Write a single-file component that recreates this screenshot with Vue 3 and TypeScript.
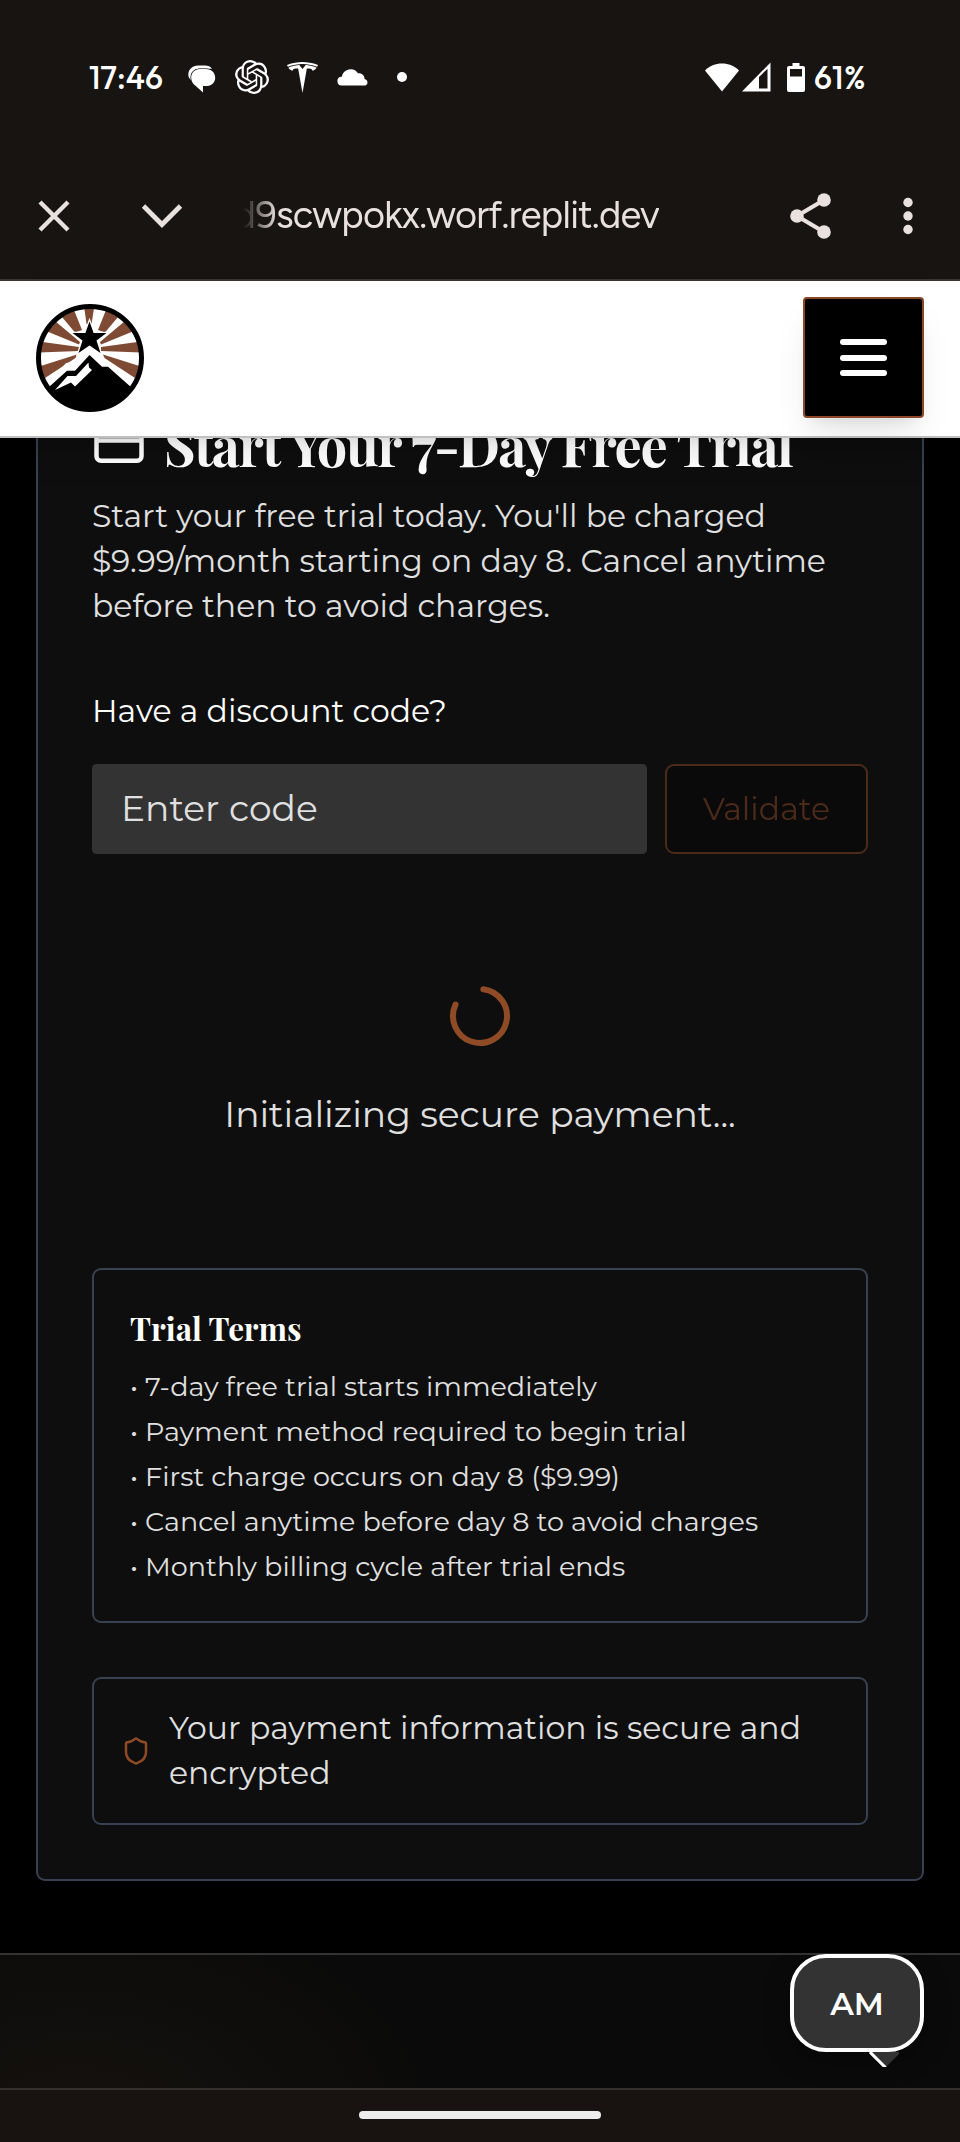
<script setup lang="ts">
import { ref } from 'vue'

const address = 'd9scwpokx.worf.replit.dev'
const code = ref('')
const terms: string[] = [
  '7-day free trial starts immediately',
  'Payment method required to begin trial',
  'First charge occurs on day 8 ($9.99)',
  'Cancel anytime before day 8 to avoid charges',
  'Monthly billing cycle after trial ends',
]
</script>

<template>
  <div class="screen">
    <div class="status-bar">
      <span class="clock">17:46</span>
      <svg class="ic-chat" width="28" height="28" viewBox="0 0 28 28">
        <path d="M10 .5h7c3 0 5.500 1 7 3.300H11C6 3.800 3 7 2.600 11.500c0 1.500.2 2.500.5 3.500C1.200 13.500.3 11.500.3 9.500.3 4.500 4.500.5 10 .5Z" fill="#fff" />
        <path d="M12 4h6c5.500 0 9.200 3.900 9.200 8.700s-3.700 8.300-9.200 8.300h-3v6.400l-7.500-6.700C4.800 19 3.200 16 3.200 12.700c0-4.800 3.500-8.700 8.800-8.700Z" fill="#fff" stroke="#181411" stroke-width="1" paint-order="stroke" />
      </svg>
      <svg class="ic-knot" width="34" height="34" viewBox="0 0 24 24">
        <path fill="#fff" d="M22.2819 9.8211a5.9847 5.9847 0 0 0-.5157-4.9108 6.0462 6.0462 0 0 0-6.5098-2.9A6.0651 6.0651 0 0 0 4.9807 4.1818a5.9847 5.9847 0 0 0-3.9977 2.9 6.0462 6.0462 0 0 0 .7427 7.0966 5.98 5.98 0 0 0 .511 4.9107 6.051 6.051 0 0 0 6.5146 2.9001A5.9847 5.9847 0 0 0 13.2599 24a6.0557 6.0557 0 0 0 5.7718-4.2058 5.9894 5.9894 0 0 0 3.9977-2.9001 6.0557 6.0557 0 0 0-.7475-7.0729zm-9.022 12.6081a4.4755 4.4755 0 0 1-2.8764-1.0408l.1419-.0804 4.7783-2.7582a.7948.7948 0 0 0 .3927-.6813v-6.7369l2.02 1.1686a.071.071 0 0 1 .038.052v5.5826a4.504 4.504 0 0 1-4.4945 4.4944zm-9.6607-4.1254a4.4708 4.4708 0 0 1-.5346-3.0137l.142.0852 4.783 2.7582a.7712.7712 0 0 0 .7806 0l5.8428-3.3685v2.3324a.0804.0804 0 0 1-.0332.0615L9.74 19.9502a4.4992 4.4992 0 0 1-6.1408-1.6464zM2.3408 7.8956a4.485 4.485 0 0 1 2.3655-1.9728V11.6a.7664.7664 0 0 0 .3879.6765l5.8144 3.3543-2.0201 1.1685a.0757.0757 0 0 1-.071 0l-4.8303-2.7865A4.504 4.504 0 0 1 2.3408 7.872zm16.5963 3.8558L13.1038 8.364 15.1192 7.2a.0757.0757 0 0 1 .071 0l4.8303 2.7913a4.4944 4.4944 0 0 1-.6765 8.1042v-5.6772a.79.79 0 0 0-.407-.667zm2.0107-3.0231l-.142-.0852-4.7735-2.7818a.7759.7759 0 0 0-.7854 0L9.409 9.2297V6.8974a.0662.0662 0 0 1 .0284-.0615l4.8303-2.7866a4.4992 4.4992 0 0 1 6.6802 4.66zM8.3065 12.863l-2.02-1.1638a.0804.0804 0 0 1-.038-.0567V6.0742a4.4992 4.4992 0 0 1 7.3757-3.4537l-.142.0805L8.704 5.459a.7948.7948 0 0 0-.3927.6813zm1.0976-2.3654l2.602-1.4998 2.6069 1.4998v2.9994l-2.5974 1.4997-2.6067-1.4997Z" />
      </svg>
      <svg class="ic-tee" width="31" height="31" viewBox="0 0 24 24">
        <path fill="#fff" d="M12 5.362l2.475-3.026s4.245.09 8.471 2.054c-1.082 1.636-3.231 2.438-3.231 2.438-.146-1.439-1.154-1.79-4.354-1.79L12 24 8.619 5.034c-3.18 0-4.188.354-4.335 1.792 0 0-2.146-.795-3.229-2.43C5.28 2.431 9.525 2.34 9.525 2.34L12 5.362l-.004.002H12v-.002zm0-3.899c3.415-.03 7.326.528 11.328 2.28.535-.968.672-1.395.672-1.395C19.625.612 15.528.015 12 0 8.472.015 4.375.61 0 2.349c0 0 .195.525.672 1.396C4.674 1.989 8.585 1.435 12 1.46v.003z" />
      </svg>
      <svg class="ic-cloud" width="32" height="18" viewBox="0 0 32 18">
        <path fill="#fff" d="M4.500 17.500a4.400 4.400 0 0 1-.6-8.700c.2 0 .6-.1.9 0A9 9 0 0 1 21 5.200c4-.4 6.600 2.300 6.600 5.800a3.400 3.400 0 0 1 .9 6.500Z" />
      </svg>
      <span class="dot"></span>
      <svg class="ic-wifi" width="34" height="29" viewBox="0 0 34 29">
        <path fill="#fff" d="M17 28.500 0 7.500C4.500 2.800 10.500.5 17 .5s12.500 2.300 17 7Z" />
      </svg>
      <svg class="ic-signal" width="29" height="30" viewBox="0 0 29 30">
        <path fill="#fff" fill-rule="evenodd" d="M0 29.500 28.500.500v29ZM17 15v11.500h8.500V6.800Z" />
      </svg>
      <svg class="ic-battery" width="18" height="29" viewBox="0 0 18 29">
        <path fill="#fff" fill-rule="evenodd" d="M5.500 0h7v3H16a2 2 0 0 1 2 2v22a2 2 0 0 1-2 2H2a2 2 0 0 1-2-2V5a2 2 0 0 1 2-2h3.500ZM3 6v7.500h12V6Z" />
      </svg>
      <span class="percent">61%</span>
    </div>

    <div class="toolbar">
      <svg class="ic-close" width="32" height="32" viewBox="0 0 32 32">
        <path d="M2 2 30 30M30 2 2 30" stroke="#e9e1de" stroke-width="4.300" />
      </svg>
      <svg class="ic-down" width="42" height="24" viewBox="0 0 42 24">
        <path d="M2.500 2 21 20.500 39.500 2" fill="none" stroke="#e9e1de" stroke-width="4.800" />
      </svg>
      <div class="address"><span>{{ address }}</span></div>
      <svg class="ic-share" width="42" height="46" viewBox="0 0 42 46">
        <path d="M34 7 7 23 34 39" fill="none" stroke="#e9e1de" stroke-width="4.200" />
        <g fill="#e9e1de">
          <circle cx="34" cy="7" r="6.800" />
          <circle cx="7" cy="23" r="6.800" />
          <circle cx="34" cy="39" r="6.800" />
        </g>
      </svg>
      <svg class="ic-more" width="10" height="38" viewBox="0 0 10 38">
        <g fill="#e9e1de">
          <circle cx="5" cy="5.500" r="4.700" />
          <circle cx="5" cy="19" r="4.700" />
          <circle cx="5" cy="32.500" r="4.700" />
        </g>
      </svg>
    </div>

    <header class="site-header">
      <svg class="logo" width="108" height="108" viewBox="0 0 108 108">
        <defs>
          <clipPath id="disc"><circle cx="54" cy="54" r="50.500" /></clipPath>
        </defs>
        <circle cx="54" cy="54" r="51.500" fill="#fff" />
        <g clip-path="url(#disc)">
          <g fill="#7f4a33">
            <path d="M48.300 4h9.700l-2.500 16h-5Z" />
            <path d="M26 13 38 6 46 26 39 28.500Z" />
            <path d="M82 13 70 6 62 26 69 28.500Z" />
            <path d="M10 27 19 17 44 38 43 40.500Z" />
            <path d="M98 27 89 17 64 38 65 40.500Z" />
            <path d="M3 37.500 43 43v4L3 48.500Z" />
            <path d="M105 37.500 65 43v4l40 1.500Z" />
            <path d="M3 62.500 41 50.500 39.500 54 9 74Z" />
            <path d="M105 62.500 67 50.500 68.500 54 99 74Z" />
          </g>
          <path d="M53.500 17.500 57.600 29H70.500L60.500 36.500 64.500 49 53.500 41.500 42.500 49 46.500 36.500 36.500 29H49.400Z" fill="#000" stroke="#fff" stroke-width="2.600" paint-order="stroke" />
          <path d="M53.500 42 40 54 36 58 30 59 8 84H100L72 60 66 54Z" fill="#fff" />
          <path d="M53.500 51 66 62.700h6L96 84v24H10L13 83l18-16.300h8Z" fill="#000" />
          <path d="M52.500 58.500 53 63.500 56 66 39 82.500 35 78.500 19 86 31.500 72h8.500Z" fill="#fff" />
        </g>
        <circle cx="54" cy="54" r="51.500" fill="none" stroke="#000" stroke-width="5" />
      </svg>
      <button class="menu" type="button" aria-label="Menu">
        <span></span><span></span><span></span>
      </button>
    </header>

    <main class="content">
      <section class="card">
        <h3 class="card-title">
          <svg width="54" height="54" viewBox="0 0 24 24" fill="none" stroke="#fff" stroke-width="2">
            <rect x="2" y="5" width="20" height="14" rx="2" />
            <path d="M2 10h20" />
          </svg>
          Start Your 7-Day Free Trial
        </h3>
        <p class="lead">Start your free trial today. You'll be charged $9.99/month starting on day 8. Cancel anytime before then to avoid charges.</p>

        <label class="label" for="code">Have a discount code?</label>
        <div class="code-row">
          <input id="code" v-model="code" class="code" placeholder="Enter code">
          <button class="validate" type="button" disabled>Validate</button>
        </div>

        <div class="loading">
          <svg class="spinner" width="72" height="72" viewBox="0 0 24 24" fill="none" stroke="#8f4a26" stroke-width="2" stroke-linecap="round">
            <path d="M21 12a9 9 0 1 1-6.219-8.560" transform="rotate(-83 12 12)" />
          </svg>
          <p>Initializing secure payment...</p>
        </div>

        <div class="terms">
          <h4>Trial Terms</h4>
          <ul>
            <li v-for="term in terms" :key="term">• {{ term }}</li>
          </ul>
        </div>

        <div class="secure">
          <svg width="30" height="36" viewBox="0 0 24 24" fill="none" stroke="#8f4a26" stroke-width="2" stroke-linecap="round" stroke-linejoin="round">
            <path d="M20 13c0 5-3.500 7.500-7.660 8.950a1 1 0 0 1-.67-.01C7.500 20.500 4 18 4 13V6a1 1 0 0 1 1-1c2 0 4.500-1.200 6.240-2.720a1.170 1.170 0 0 1 1.520 0C14.510 3.810 17 5 19 5a1 1 0 0 1 1 1z" />
          </svg>
          <span>Your payment information is secure and encrypted</span>
        </div>
      </section>

      <footer class="footer">
        <div class="bubble">
          <span>AM</span>
          <i class="tail"></i>
        </div>
      </footer>
    </main>

    <div class="nav-bar"><span></span></div>
  </div>
</template>

<style>
body {
  margin: 0;
  background: #000;
}
</style>

<style scoped>
.screen,
.screen * {
  box-sizing: border-box;
}
.screen {
  display: flex;
  flex-direction: column;
  width: 960px;
  height: 2142px;
  overflow: hidden;
  background: #000;
  font-family: Montserrat, "Open Sans", sans-serif;
  color: #fff;
}
.screen svg {
  display: block;
  flex: none;
}
h3, h4, p, ul {
  margin: 0;
  padding: 0;
}

.status-bar {
  display: flex;
  align-items: center;
  height: 154px;
  padding-left: 89px;
  background: #181411;
}
.clock,
.percent {
  font-family: "Google Sans", Outfit, Figtree, Montserrat, sans-serif;
  font-size: 32px;
  font-weight: 500;
  line-height: 40px;
  letter-spacing: 0;
}
.clock { width: 99px; }
.ic-chat { margin-top: 3px; }
.ic-knot { margin-left: 19px; }
.ic-tee { margin-left: 18px; }
.ic-cloud { margin-left: 19px; }
.dot {
  width: 10px;
  height: 10px;
  margin-left: 28px;
  border-radius: 50%;
  background: #fff;
}
.ic-wifi { margin-left: 298px; }
.ic-signal { margin-left: 3px; }
.ic-battery { margin: 0 9px 0 16px; }
.percent { letter-spacing: 0.8px; }

.toolbar {
  display: flex;
  align-items: center;
  height: 127px;
  padding: 0 0 2px 38px;
  background: #181411;
  border-bottom: 2px solid #3b3532;
}
.ic-down { margin-left: 71px; }
.address {
  display: flex;
  justify-content: flex-end;
  width: 416px;
  margin: -2px 0 0 60px;
  overflow: hidden;
  font-family: "Google Sans", Figtree, Roboto, sans-serif;
  font-size: 38px;
  line-height: 50px;
  letter-spacing: -0.75px;
  color: #e9e1de;
  white-space: nowrap;
  -webkit-mask-image: linear-gradient(to right, transparent, #000 34px);
  mask-image: linear-gradient(to right, transparent, #000 34px);
}
.ic-share { margin-left: 131px; }
.ic-more { margin-left: 71px; }

.site-header {
  position: relative;
  z-index: 2;
  display: flex;
  flex: none;
  justify-content: space-between;
  align-items: center;
  height: 157px;
  padding: 0 36px;
  background: #fff;
  border-bottom: 2px solid #c0c0c0;
  box-shadow: 0 22px 34px -7px rgba(0, 0, 0, 0.1), 0 9px 14px -9px rgba(0, 0, 0, 0.1);
}
.logo { margin-top: -2px; }
.menu {
  display: flex;
  flex-direction: column;
  justify-content: center;
  align-items: center;
  gap: 9.750px;
  width: 121px;
  height: 121px;
  margin-top: -2px;
  padding: 0;
  border: 2px solid #8b4726;
  border-radius: 4px;
  background: #000;
  box-shadow: 0 22px 34px -7px rgba(0, 0, 0, 0.1), 0 9px 14px -9px rgba(0, 0, 0, 0.1);
}
.menu span {
  width: 47px;
  height: 6px;
  border-radius: 3px;
  background: #fff;
}

.content {
  display: flex;
  flex-direction: column;
  height: 1650px;
  overflow: hidden;
}
.card {
  flex: none;
  height: 1519px;
  margin: -76px 36px 0;
  padding: 54px;
  background: #0e0e0e;
  border: 2px solid #374151;
  border-radius: 9px;
}
.card-title {
  display: flex;
  align-items: center;
  gap: 18px;
  font-family: "Playfair Display", "Liberation Serif", serif;
  font-size: 54px;
  font-weight: 700;
  line-height: 54px;
  letter-spacing: -0.025em;
  white-space: nowrap;
}
.lead {
  margin-top: 21.500px;
  font-size: 31.500px;
  line-height: 45px;
  color: #e0e0e0;
}
.label {
  display: block;
  margin-top: 60.500px;
  font-size: 31.500px;
  line-height: 45px;
}
.code-row {
  display: flex;
  gap: 18px;
  margin-top: 30px;
}
.code {
  flex: 1;
  min-width: 0;
  height: 90px;
  padding: 0 29px 2px;
  border: 0;
  border-radius: 4.500px;
  outline: none;
  background: #333;
  color: #fff;
  font: 400 36px Montserrat, "Open Sans", sans-serif;
}
.code::placeholder {
  color: #e0e0e0;
  opacity: 1;
}
.validate {
  width: 203px;
  height: 90px;
  padding: 0;
  border: 2px solid #8b4726;
  border-radius: 9px;
  background: #080808;
  color: #8b4726;
  font: 400 31.500px Montserrat, "Open Sans", sans-serif;
  opacity: 0.5;
}
.loading {
  display: flex;
  flex-direction: column;
  align-items: center;
  height: 414px;
  padding-top: 126px;
}
.loading p {
  margin-top: 35px;
  font-size: 36px;
  line-height: 54px;
  color: #e0e0e0;
}
.terms {
  height: 355px;
  padding: 36px;
  border: 2px solid #374151;
  border-radius: 9px;
}
.terms h4 {
  font-family: "Playfair Display", "Liberation Serif", serif;
  font-size: 31.500px;
  font-weight: 700;
  line-height: 45px;
}
.terms ul {
  display: flex;
  flex-direction: column;
  gap: 9px;
  margin-top: 18px;
  list-style: none;
  font-size: 27px;
  line-height: 36px;
  color: #e0e0e0;
}
.secure {
  display: flex;
  align-items: center;
  gap: 18px;
  height: 148px;
  margin-top: 54px;
  padding: 27px;
  border: 2px solid #374151;
  border-radius: 9px;
  font-size: 31.500px;
  line-height: 45px;
  color: #e0e0e0;
}

.footer {
  display: flex;
  flex: 1;
  justify-content: flex-end;
  align-items: flex-start;
  margin-top: 72px;
  padding-right: 36px;
  border-top: 2px solid #333;
  background: radial-gradient(ellipse 380px 240px at 8% 130%, rgba(139, 105, 55, 0.09), transparent), #0a0a0a;
}
.bubble {
  position: relative;
  display: flex;
  justify-content: center;
  align-items: center;
  width: 134px;
  height: 98px;
  margin-top: -1px;
  border: 4px solid #fff;
  border-radius: 36px;
  background: #333;
  font-size: 31.500px;
  font-weight: 600;
  box-shadow: 0 9px 27px rgba(0, 0, 0, 0.3);
}
.bubble span { padding-top: 2px; }
.tail {
  position: absolute;
  right: 21px;
  bottom: -19px;
  width: 30px;
  height: 15px;
  overflow: hidden;
}
.tail::before {
  content: "";
  position: absolute;
  left: 4px;
  top: -11.500px;
  width: 22px;
  height: 22px;
  border-left: 3px solid #fff;
  background: #333;
  transform: rotate(-45deg);
}
.nav-bar {
  display: flex;
  flex: none;
  justify-content: center;
  height: 54px;
  padding-top: 21px;
  border-top: 2px solid #36312f;
  background: #181310;
}
.nav-bar span {
  width: 242px;
  height: 8px;
  border-radius: 4px;
  background: #ececec;
}
</style>
